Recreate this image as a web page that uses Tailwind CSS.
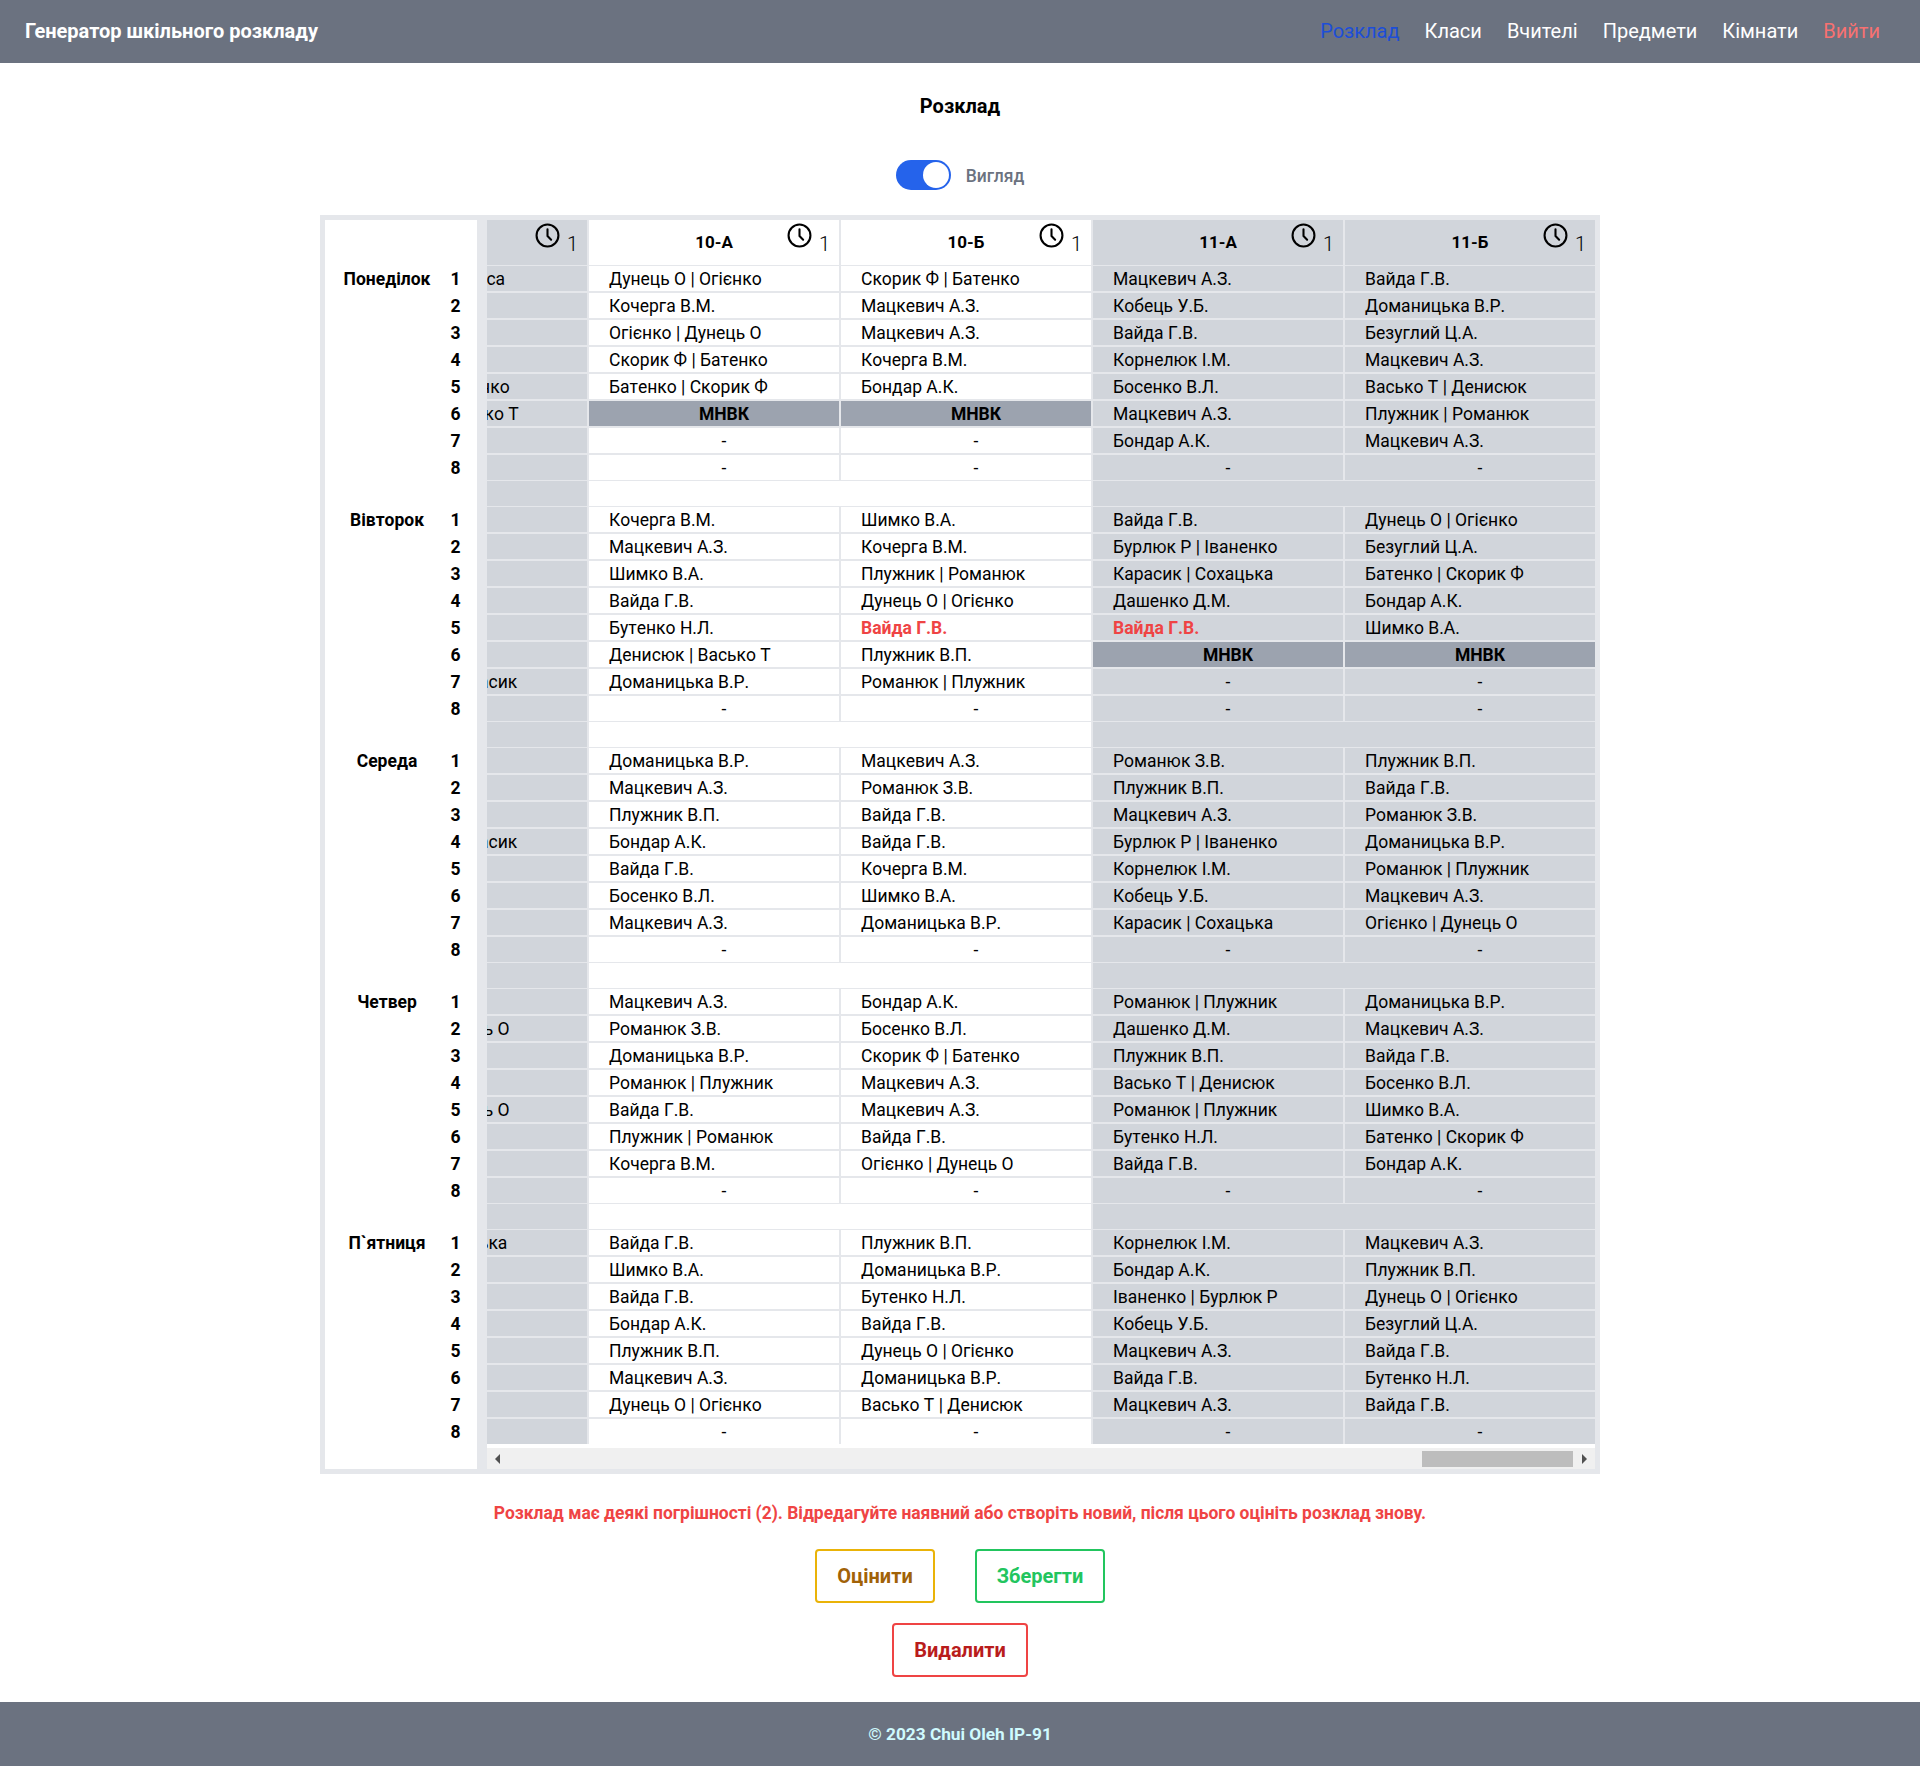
<!DOCTYPE html>
<html lang="uk">
<head>
  <meta charset="UTF-8" />
  <title>Генератор шкільного розкладу</title>
  <script src="https://cdn.jsdelivr.net/npm/@tailwindcss/browser@4"></script>
</head>
<body class="bg-white font-['Roboto',sans-serif] text-black">
  <!-- Navbar -->
  <nav class="h-[63px] pb-px bg-[#6b7280] flex items-center justify-between pl-[25px] pr-[40px]">
    <span class="text-[20px] font-bold text-white">Генератор шкільного розкладу</span>
    <div class="flex gap-[25px] text-[20px]">
      <a class="text-[#1d4ed8]">Розклад</a>
      <a class="text-white">Класи</a>
      <a class="text-white">Вчителі</a>
      <a class="text-white">Предмети</a>
      <a class="text-white">Кімнати</a>
      <a class="text-[#f87171]">Вийти</a>
    </div>
  </nav>

  <main class="flex flex-col items-center">
    <h1 class="mt-[31px] h-[24px] leading-[24px] text-[20px] font-bold">Розклад</h1>

    <!-- Toggle -->
    <div class="mt-[42px] h-[30px] flex items-center gap-[15px]">
      <div class="w-[55px] h-[30px] rounded-full bg-[#2563eb] flex items-center justify-end pr-[2px]">
        <div class="w-[26px] h-[26px] rounded-full bg-white"></div>
      </div>
      <span class="pt-[3px] text-[17.5px] text-[#6b7280] font-medium">Вигляд</span>
    </div>

    <!-- Timetable -->
    <div class="mt-[25px] w-[1280px] h-[1259px] border-[5px] border-[#e5e7eb] bg-[#e5e7eb] flex text-[17.5px] [font-kerning:none]">
      <div id="days" class="w-[152px] bg-white pt-[46px] font-bold"></div>
      <div class="ml-[10px] w-[1108px] flex flex-col bg-white overflow-hidden">
        <div id="grid" class="ml-[-150px] w-[1258px] bg-[#e5e7eb]"></div>
        <!-- Scrollbar -->
        <div class="mt-[4px] h-[21px] bg-[#f0f0f0] flex items-center pl-[8px]">
          <div class="w-0 h-0 border-y-[5px] border-y-transparent border-r-[5px] border-r-[#505050]"></div>
          <div class="ml-[922px] w-[151px] h-[16px] bg-[#bdbdbd]"></div>
          <div class="ml-[9px] w-0 h-0 border-y-[5px] border-y-transparent border-l-[5px] border-l-[#505050]"></div>
        </div>
      </div>
    </div>

    <p class="mt-[29px] h-[20px] leading-[20px] text-[17.45px] font-bold text-[#ef4444]">Розклад має деякі погрішності (2). Відредагуйте наявний або створіть новий, після цього оцініть розклад знову.</p>

    <div class="mt-[26px] flex gap-[40px]">
      <button class="w-[120px] h-[54px] rounded border-2 border-[#eab308] text-[#a16207] text-[20px] font-bold">Оцінити</button>
      <button class="w-[130px] h-[54px] rounded border-2 border-[#22c55e] text-[#22c55e] text-[20px] font-bold">Зберегти</button>
    </div>
    <button class="mt-[20px] w-[136px] h-[54px] rounded border-2 border-[#ef4444] text-[#b91c1c] text-[20px] font-bold">Видалити</button>
  </main>

  <footer class="mt-[25px] h-[64px] pt-px bg-[#6b7280] flex items-center justify-center text-[17.25px] font-bold text-[#cffafe]">© 2023 Chui Oleh IP-91</footer>

  <script>
    const days = ['Понеділок', 'Вівторок', 'Середа', 'Четвер', 'П`ятниця'];
    // columns: first one is scrolled almost out of view
    const classes = [
      { name: '', shade: 'bg-[#d1d5db]' },
      { name: '10-А', shade: 'bg-white' },
      { name: '10-Б', shade: 'bg-white' },
      { name: '11-А', shade: 'bg-[#d1d5db]' },
      { name: '11-Б', shade: 'bg-[#d1d5db]' },
    ];
    const hidden = 'Васильченко';
    const table = [
      [
        ['Денисюк | Олекса', 'Дунець О | Огієнко', 'Скорик Ф | Батенко', 'Мацкевич А.З.', 'Вайда Г.В.'],
        [hidden, 'Кочерга В.М.', 'Мацкевич А.З.', 'Кобець У.Б.', 'Доманицька В.Р.'],
        [hidden, 'Огієнко | Дунець О', 'Мацкевич А.З.', 'Вайда Г.В.', 'Безуглий Ц.А.'],
        [hidden, 'Скорик Ф | Батенко', 'Кочерга В.М.', 'Корнелюк І.М.', 'Мацкевич А.З.'],
        ['Дунець О | Огієнко', 'Батенко | Скорик Ф', 'Бондар А.К.', 'Босенко В.Л.', 'Васько Т | Денисюк'],
        ['Денисюк | Васько Т', '!МНВК', '!МНВК', 'Мацкевич А.З.', 'Плужник | Романюк'],
        [hidden, '-', '-', 'Бондар А.К.', 'Мацкевич А.З.'],
        [hidden, '-', '-', '-', '-'],
      ],
      [
        [hidden, 'Кочерга В.М.', 'Шимко В.А.', 'Вайда Г.В.', 'Дунець О | Огієнко'],
        [hidden, 'Мацкевич А.З.', 'Кочерга В.М.', 'Бурлюк Р | Іваненко', 'Безуглий Ц.А.'],
        [hidden, 'Шимко В.А.', 'Плужник | Романюк', 'Карасик | Сохацька', 'Батенко | Скорик Ф'],
        [hidden, 'Вайда Г.В.', 'Дунець О | Огієнко', 'Дашенко Д.М.', 'Бондар А.К.'],
        [hidden, 'Бутенко Н.Л.', '*Вайда Г.В.', '*Вайда Г.В.', 'Шимко В.А.'],
        [hidden, 'Денисюк | Васько Т', 'Плужник В.П.', '!МНВК', '!МНВК'],
        ['Сохацька | Карасик', 'Доманицька В.Р.', 'Романюк | Плужник', '-', '-'],
        [hidden, '-', '-', '-', '-'],
      ],
      [
        [hidden, 'Доманицька В.Р.', 'Мацкевич А.З.', 'Романюк З.В.', 'Плужник В.П.'],
        [hidden, 'Мацкевич А.З.', 'Романюк З.В.', 'Плужник В.П.', 'Вайда Г.В.'],
        [hidden, 'Плужник В.П.', 'Вайда Г.В.', 'Мацкевич А.З.', 'Романюк З.В.'],
        ['Сохацька | Карасик', 'Бондар А.К.', 'Вайда Г.В.', 'Бурлюк Р | Іваненко', 'Доманицька В.Р.'],
        [hidden, 'Вайда Г.В.', 'Кочерга В.М.', 'Корнелюк І.М.', 'Романюк | Плужник'],
        [hidden, 'Босенко В.Л.', 'Шимко В.А.', 'Кобець У.Б.', 'Мацкевич А.З.'],
        [hidden, 'Мацкевич А.З.', 'Доманицька В.Р.', 'Карасик | Сохацька', 'Огієнко | Дунець О'],
        [hidden, '-', '-', '-', '-'],
      ],
      [
        [hidden, 'Мацкевич А.З.', 'Бондар А.К.', 'Романюк | Плужник', 'Доманицька В.Р.'],
        ['Огієнко | Дунець О', 'Романюк З.В.', 'Босенко В.Л.', 'Дашенко Д.М.', 'Мацкевич А.З.'],
        [hidden, 'Доманицька В.Р.', 'Скорик Ф | Батенко', 'Плужник В.П.', 'Вайда Г.В.'],
        [hidden, 'Романюк | Плужник', 'Мацкевич А.З.', 'Васько Т | Денисюк', 'Босенко В.Л.'],
        ['Огієнко | Дунець О', 'Вайда Г.В.', 'Мацкевич А.З.', 'Романюк | Плужник', 'Шимко В.А.'],
        [hidden, 'Плужник | Романюк', 'Вайда Г.В.', 'Бутенко Н.Л.', 'Батенко | Скорик Ф'],
        [hidden, 'Кочерга В.М.', 'Огієнко | Дунець О', 'Вайда Г.В.', 'Бондар А.К.'],
        [hidden, '-', '-', '-', '-'],
      ],
      [
        ['Шимко | Сохацька', 'Вайда Г.В.', 'Плужник В.П.', 'Корнелюк І.М.', 'Мацкевич А.З.'],
        [hidden, 'Шимко В.А.', 'Доманицька В.Р.', 'Бондар А.К.', 'Плужник В.П.'],
        [hidden, 'Вайда Г.В.', 'Бутенко Н.Л.', 'Іваненко | Бурлюк Р', 'Дунець О | Огієнко'],
        [hidden, 'Бондар А.К.', 'Вайда Г.В.', 'Кобець У.Б.', 'Безуглий Ц.А.'],
        [hidden, 'Плужник В.П.', 'Дунець О | Огієнко', 'Мацкевич А.З.', 'Вайда Г.В.'],
        [hidden, 'Мацкевич А.З.', 'Доманицька В.Р.', 'Вайда Г.В.', 'Бутенко Н.Л.'],
        [hidden, 'Дунець О | Огієнко', 'Васько Т | Денисюк', 'Мацкевич А.З.', 'Вайда Г.В.'],
        [hidden, '-', '-', '-', '-'],
      ],
    ];

    const clock = '<svg class="w-[25px] h-[25px]" viewBox="0 0 24 24" fill="none" stroke="currentColor" stroke-width="2" stroke-linecap="round" stroke-linejoin="round"><circle cx="12" cy="12" r="10.5"/><path d="M12 6v6.5l3.5 3.5"/></svg>';

    function cell(value, col) {
      const shade = classes[col].shade;
      if (value === hidden) return `<div class="h-[25px] ${shade}"></div>`;
      if (value[0] === '!') return `<div class="h-[25px] leading-[26px] bg-[#9ca3af] pl-[20px] text-center font-bold">${value.slice(1)}</div>`;
      if (value[0] === '*') return `<div class="h-[25px] leading-[26px] ${shade} pl-[20px] font-bold text-[#ef4444]">${value.slice(1)}</div>`;
      if (value === '-') return `<div class="h-[25px] leading-[26px] ${shade} pl-[20px] text-center">-</div>`;
      return `<div class="h-[25px] leading-[26px] ${shade} pl-[20px] whitespace-nowrap">${value}</div>`;
    }

    let html = '<div class="grid grid-cols-[250px_250px_250px_250px_250px] gap-x-[2px] mb-[1px]">';
    classes.forEach((c) => {
      html += `<div class="relative h-[45px] pt-px ${c.shade} flex items-center justify-center text-[17px] font-bold">${c.name}
        <div class="absolute top-[3px] right-[27px] font-normal">${clock}</div>
        <span class="absolute top-[14px] right-[9px] text-[20px] leading-[20px] font-light">1</span></div>`;
    });
    html += '</div>';
    table.forEach((rows, d) => {
      rows.forEach((row) => {
        html += '<div class="grid grid-cols-[250px_250px_250px_250px_250px] gap-x-[2px] mb-[2px] last:mb-0">';
        row.forEach((v, i) => { html += cell(v, i); });
        html += '</div>';
      });
      if (d < table.length - 1) {
        // separator row between days: merged cells, thinner lines
        html += `<div class="grid grid-cols-[250px_250px_250px_250px_250px] gap-x-[2px] -mt-px mb-px h-[25px]">
          <div class="bg-[#d1d5db]"></div>
          <div class="col-span-2 bg-white"></div>
          <div class="col-span-2 bg-[#d1d5db]"></div>
        </div>`;
      }
    });
    document.getElementById('grid').innerHTML = html;

    let left = '';
    days.forEach((day) => {
      for (let n = 1; n <= 8; n++) {
        left += `<div class="flex h-[27px] leading-[26px] whitespace-nowrap"><span class="w-[124px] text-center">${n === 1 ? day : ''}</span><span class="w-[13px] flex justify-center">${n}</span></div>`;
      }
      left += '<div class="h-[25px]"></div>';
    });
    document.getElementById('days').innerHTML = left;
  </script>
</body>
</html>
